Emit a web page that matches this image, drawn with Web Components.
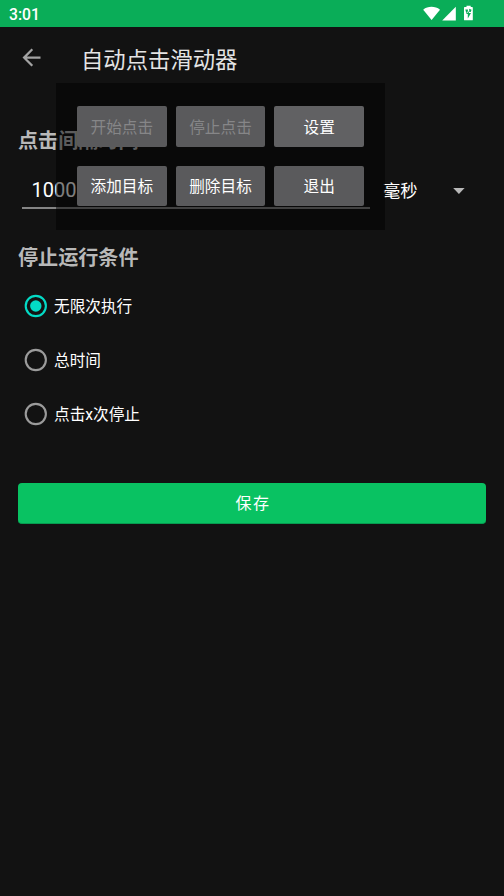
<!DOCTYPE html>
<html lang="zh-CN">
<head>
<meta charset="utf-8">
<title>自动点击滑动器</title>
<style>
html, body { margin: 0; height: 100%; background: #121212; overflow: hidden; }
body { font-family: Roboto, "Noto Sans CJK SC", sans-serif; color: #fff; }
</style>
</head>
<body>
<clicker-app></clicker-app>
<script>
function define(name, html) {
  const t = document.createElement('template');
  t.innerHTML = html;
  customElements.define(name, class extends HTMLElement {
    constructor() {
      super();
      this.attachShadow({ mode: 'open' }).append(t.content.cloneNode(true));
    }
  });
}

define('status-bar', `
<style>
:host { display: flex; height: 27px; box-sizing: border-box; background: #0aad58; align-items: center; padding: 1px 30px 0 9px; font: 500 15.7px/26px Roboto, sans-serif; }
span { flex: 1; padding-top: 2px; line-height: 24px; }
svg { display: block; }
</style>
<span>3:01</span>
<svg width="52" height="18" viewBox="0 0 52 18" fill="#fff">
  <path d="M1.2 4.7C5.7 .9 13.2 .9 18 4.7L9.6 15.1Z"/>
  <path d="M33.8 1.7V15.4H20.2Z"/>
  <path d="M43 2.1h1.5V.7h4.2v1.4h1.5q.6 0 .6.6v12q0 .6-.6.6H42.6q-.6 0-.6-.6V2.7q0-.6.6-.6z"/>
  <path d="M43.3 4.6h2.6v3.2h-1.7zM47.2 3.8l2.4.9-.9 2.2h-1.5zM46 5.7l-1.8 3.2h1.6v4.7l3.2-5.5h-1.9z" fill="#0aad58"/>
</svg>`);

define('app-bar', `
<style>
:host { display: flex; height: 64px; align-items: center; padding-left: 17.5px; }
svg { display: block; margin: -3px 36.5px 0 0; }
h1 { margin: 2px 0 0; font-size: 22.35px; font-weight: 400; line-height: 32px; color: #e4e4e4; }
</style>
<svg width="27" height="27" viewBox="0 0 24 24" fill="#a3a3a3"><path d="M20 11H7.83l5.59-5.59L12 4l-8 8 8 8 1.41-1.41L7.83 13H20v-2z"/></svg>
<h1><slot></slot></h1>`);

define('section-title', `
<style>
:host { display: block; font-size: 20.1px; font-weight: 700; line-height: 30px; color: #b8b8b8; }
</style><slot></slot>`);

define('number-field', `
<style>
:host { display: block; box-sizing: border-box; width: 348px; height: 38px; padding: 4px 9.5px 0; border-bottom: 2px solid #858585; font-size: 20px; line-height: 30px; color: #fff; }
</style><slot></slot>`);

define('unit-select', `
<style>
:host { display: flex; flex: 1; align-items: center; justify-content: space-between; padding-right: 21px; font-size: 17.3px; line-height: 30px; color: #fff; }
svg { display: block; }
</style><slot></slot>
<svg width="12" height="6" viewBox="0 0 12 6"><path d="M.2.1h11.4L5.9 5.9z" fill="#b8b8b8"/></svg>`);

define('radio-option', `
<style>
:host { display: flex; align-items: center; gap: 6px; height: 53.7px; font-size: 15.65px; line-height: 24px; color: #fff; }
svg { display: block; }
span { padding-top: 2px; }
circle { fill: none; stroke: #9b9b9b; stroke-width: 2.1; }
.dot { display: none; }
:host([checked]) circle { stroke: #03dac5; }
:host([checked]) .dot { display: block; fill: #03dac5; stroke: none; }
</style>
<svg width="24" height="24" viewBox="0 0 24 24"><circle cx="11.8" cy="12" r="10.1"/><circle class="dot" cx="11.8" cy="12" r="5.7"/></svg>
<span><slot></slot></span>`);

define('save-button', `
<style>
:host { display: flex; align-items: center; justify-content: center; box-sizing: border-box; height: 41px; border-radius: 4px; background: #09c262; border-bottom: 1px solid #079b50; font-size: 16px; letter-spacing: 1.5px; line-height: 24px; color: #fff; }
span { padding: 2px 0 0 2px; }
</style><span><slot></slot></span>`);

define('panel-button', `
<style>
:host { display: flex; align-items: center; justify-content: center; box-sizing: border-box; padding-top: 2px; border-radius: 2px; background: #5a5a5c; font-size: 15.65px; line-height: 24px; color: #fff; }
:host([bright]) { background: #616163; }
:host([disabled]) { color: #868688; }
</style><slot></slot>`);

define('floating-panel', `
<style>
:host { position: absolute; left: 56px; top: 83px; width: 329px; height: 147px; box-sizing: border-box; padding: 23px 21px; background: rgba(0,0,0,.5); display: grid; grid-template-columns: repeat(3, 1fr); grid-template-rows: 41px 40px; column-gap: 9px; row-gap: 19px; }
</style><slot></slot>`);

define('clicker-app', `
<style>
:host { display: block; position: relative; height: 896px; background: #121212; }
main { display: flex; flex-direction: column; padding: 35px 18px 0; }
.row { display: flex; margin: 15px 0 34px 4px; gap: 13px; align-items: center; }
unit-select { margin-top: 1px; }
.radios { margin: 6.6px 0 42.3px 6px; }
</style>
<status-bar></status-bar>
<app-bar>自动点击滑动器</app-bar>
<main>
  <section-title>点击间隔时间</section-title>
  <div class="row"><number-field>1000</number-field><unit-select>毫秒</unit-select></div>
  <section-title>停止运行条件</section-title>
  <div class="radios">
    <radio-option checked>无限次执行</radio-option>
    <radio-option>总时间</radio-option>
    <radio-option>点击x次停止</radio-option>
  </div>
  <save-button>保存</save-button>
</main>
<floating-panel>
  <panel-button disabled>开始点击</panel-button>
  <panel-button disabled>停止点击</panel-button>
  <panel-button bright>设置</panel-button>
  <panel-button>添加目标</panel-button>
  <panel-button>删除目标</panel-button>
  <panel-button>退出</panel-button>
</floating-panel>`);
</script>
</body>
</html>
